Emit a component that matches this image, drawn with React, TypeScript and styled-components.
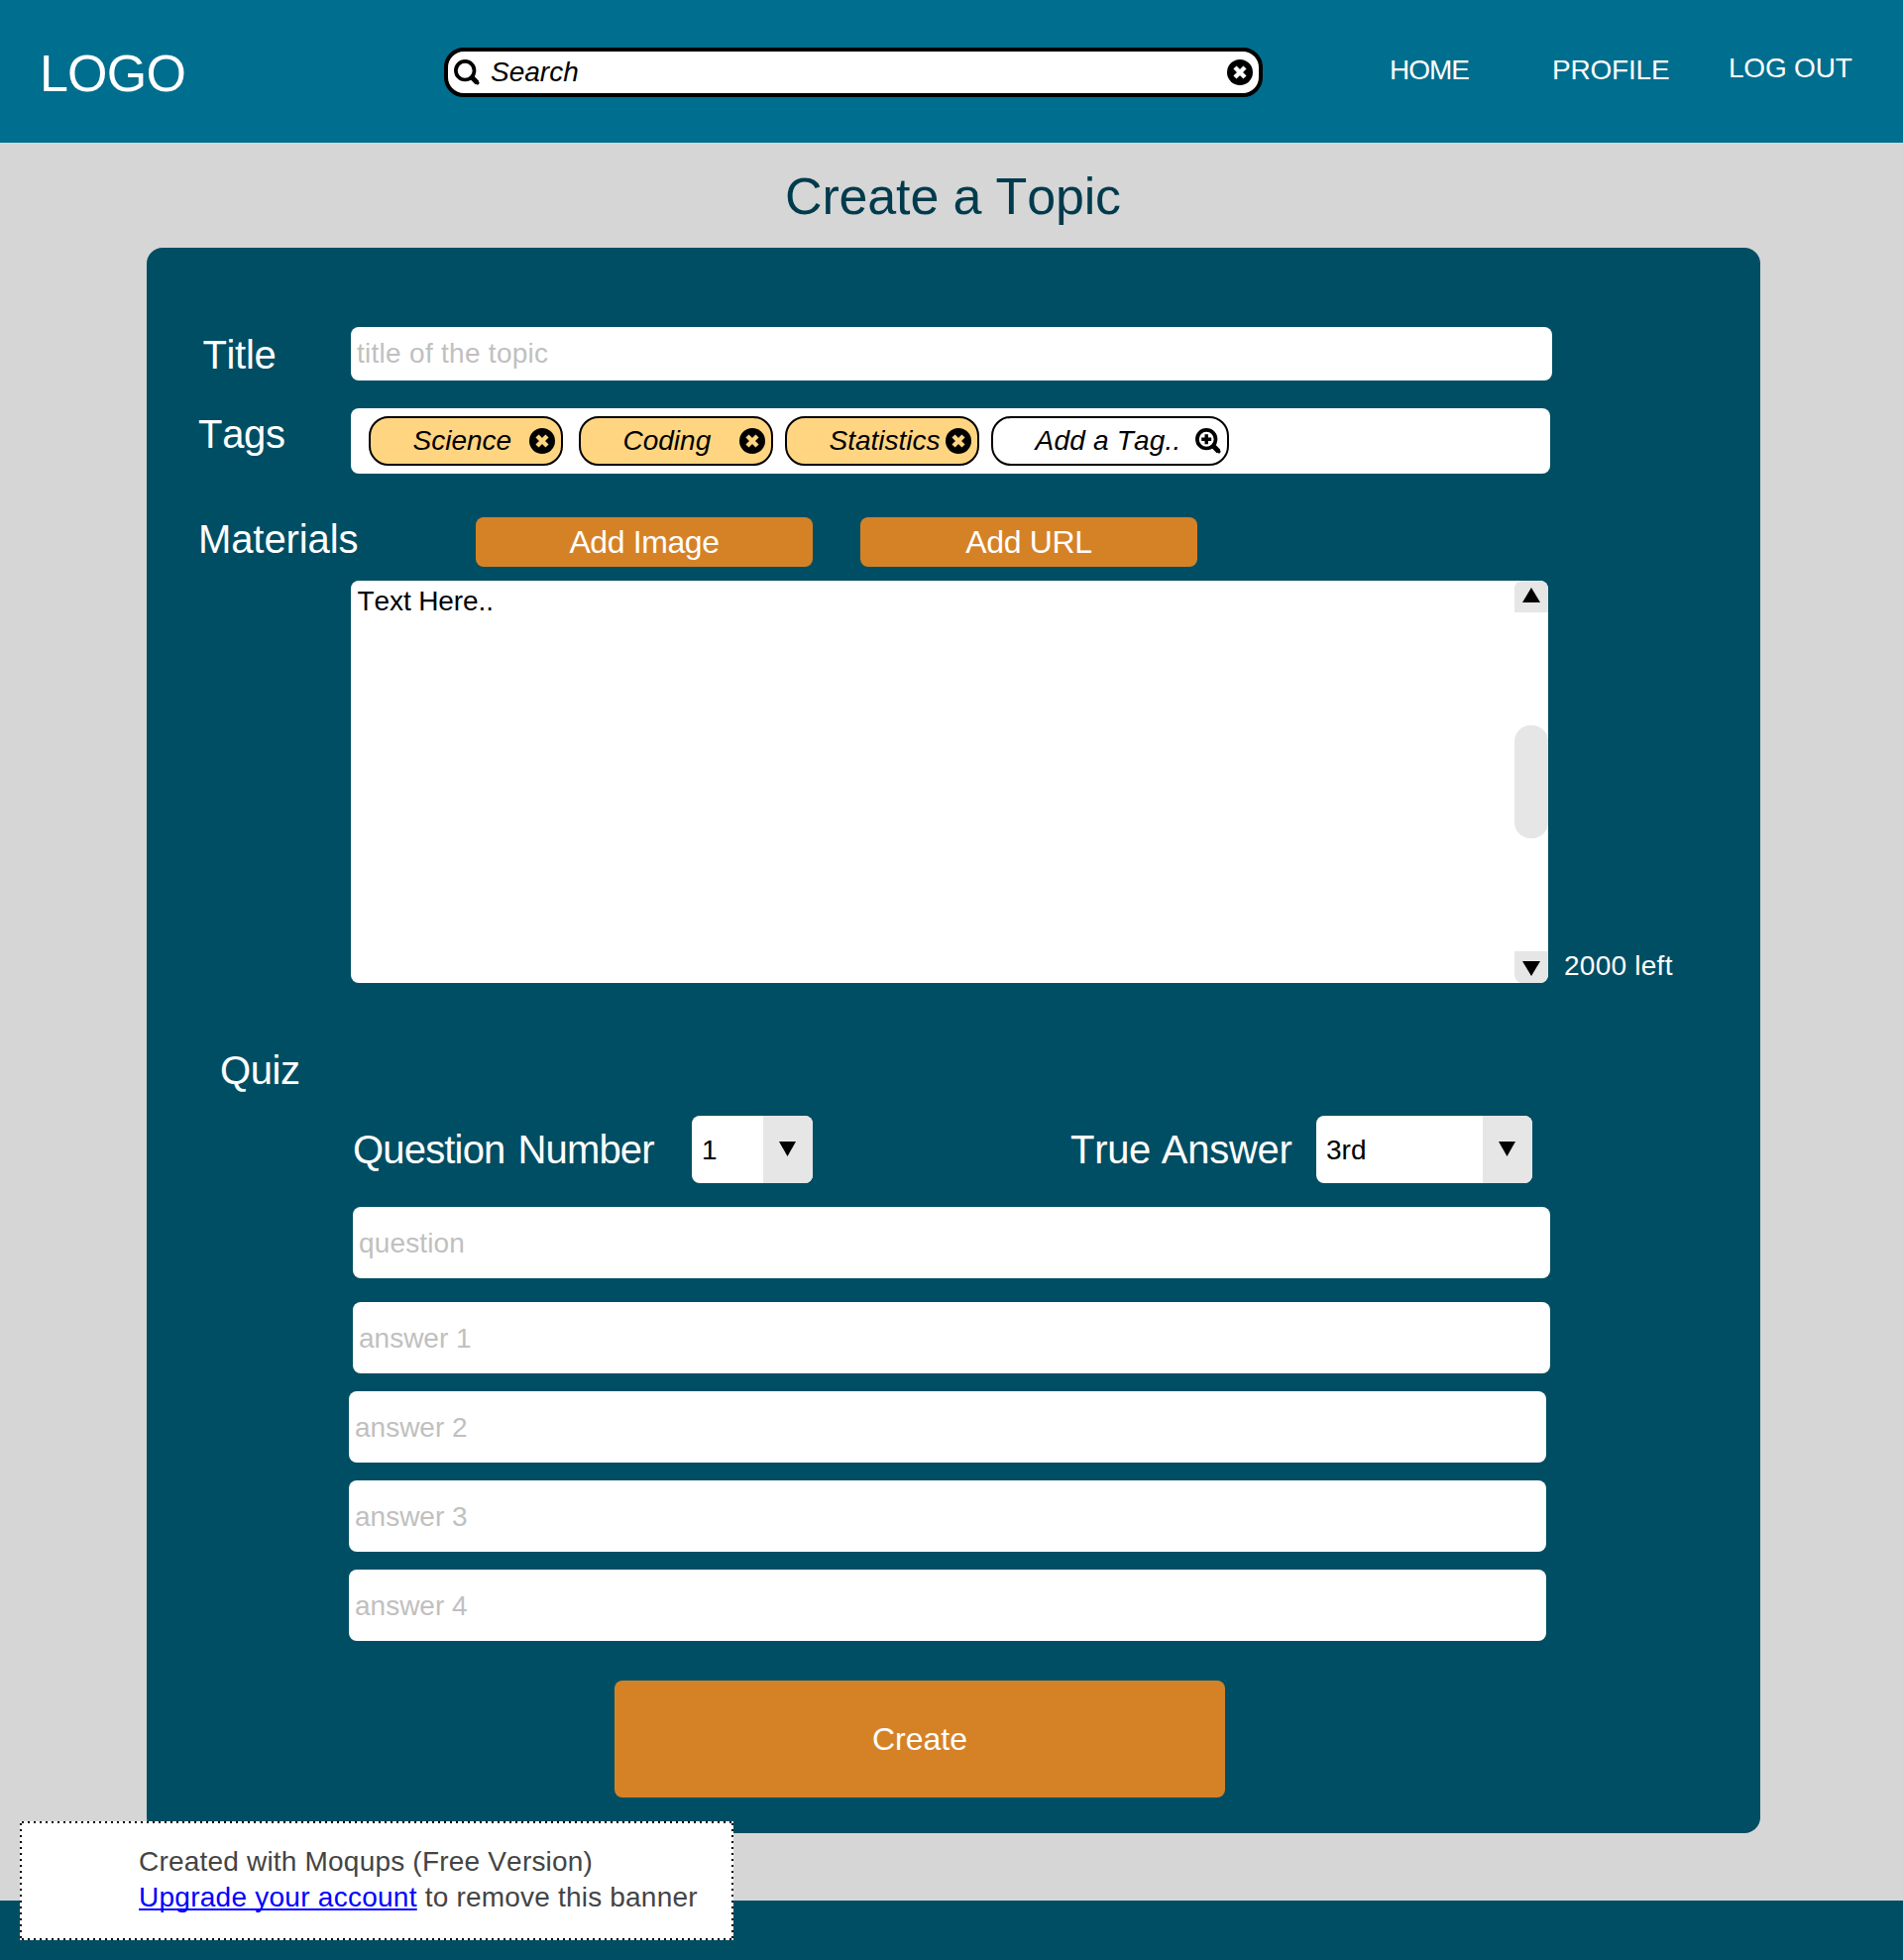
import React from "react";
import styled, { createGlobalStyle } from "styled-components";

const GlobalStyle = createGlobalStyle`
  * { box-sizing: border-box; }
  body { margin: 0; background: #d6d6d6; font-family: "Liberation Sans", Arial, sans-serif; font-size: 28px; line-height: 31px; font-kerning: none; color: #000; }
  button { font: inherit; font-kerning: none; }
`;

const Page = styled.div`
  width: 1920px;
  height: 1978px;
  display: flex;
  flex-direction: column;
  position: relative;
`;

const Header = styled.header`
  height: 144px;
  flex: none;
  display: flex;
  align-items: flex-start;
  background: #006e8e;
  color: #fff;
`;

const Logo = styled.div`
  width: 448px;
  padding: 45px 0 0 40px;
  font-size: 52px;
  line-height: 58px;
  letter-spacing: -0.8px;
`;

const SearchBox = styled.div`
  width: 826px;
  height: 50px;
  margin-top: 48px;
  padding: 0 6px;
  display: flex;
  align-items: center;
  justify-content: space-between;
  border: 4px solid #000;
  border-radius: 20px;
  background: #fff;
  color: #000;
`;

const SearchField = styled.div`
  display: flex;
  align-items: center;
  gap: 11px;
  font-style: italic;
`;

const SearchText = styled.span`
  padding-bottom: 2px;
`;

const Nav = styled.nav`
  display: flex;
  margin-left: 128px;
`;

const NavLink = styled.a<{ $width: number; $top?: number; $spacing?: number }>`
  width: ${(p) => p.$width}px;
  padding-top: ${(p) => p.$top ?? 55}px;
  letter-spacing: ${(p) => p.$spacing ?? 0}px;
  white-space: nowrap;
`;

const PageTitle = styled.h1`
  margin: 25px 0 23px;
  padding-left: 3px;
  text-align: center;
  font-size: 52px;
  line-height: 58px;
  font-weight: 400;
  letter-spacing: -0.15px;
  color: #003b4d;
`;

const Panel = styled.main`
  width: 1628px;
  height: 1600px;
  flex: none;
  margin-left: 148px;
  padding-top: 80px;
  border-radius: 16px;
  background: #004e63;
  color: #fff;
`;

const Row = styled.div<{ $gap: number }>`
  display: flex;
  align-items: flex-start;
  margin-bottom: ${(p) => p.$gap}px;
`;

const RowLabel = styled.div<{ $left: number; $top: number; $width?: number; $spacing?: number; $words?: number }>`
  width: ${(p) => p.$width ?? 206}px;
  flex: none;
  padding: ${(p) => p.$top}px 0 0 ${(p) => p.$left}px;
  font-size: 40px;
  line-height: 44px;
  white-space: nowrap;
  letter-spacing: ${(p) => p.$spacing ?? 0}px;
  word-spacing: ${(p) => p.$words ?? 0}px;
`;

const Field = styled.div<{ $width?: number; $height?: number; $spacing?: number }>`
  width: ${(p) => p.$width ?? 1208}px;
  height: ${(p) => p.$height ?? 72}px;
  padding-left: 6px;
  display: flex;
  align-items: center;
  border-radius: 8px;
  background: #fff;
  color: #c0c0c0;
  letter-spacing: ${(p) => p.$spacing ?? 0}px;
`;

const TitleField = styled(Field)`
  padding-bottom: 2px;
`;

const TagField = styled(Field)`
  padding-left: 18px;
  color: #000;
`;

const Tag = styled.div<{ $gap?: number; $open?: boolean }>`
  width: ${(p) => (p.$open ? 240 : 196)}px;
  height: 50px;
  margin-right: ${(p) => p.$gap ?? 0}px;
  padding: 0 6px 0 42.5px;
  display: flex;
  align-items: center;
  justify-content: space-between;
  border: 2px solid #000;
  border-radius: 20px;
  background: ${(p) => (p.$open ? "#fff" : "#ffd581")};
  font-style: italic;
  white-space: nowrap;
  letter-spacing: ${(p) => (p.$open ? 0.2 : 0)}px;
`;

const TagName = styled.span`
  width: 0;
  padding-bottom: 2px;
`;

const Action = styled.button<{ $width: number; $height: number; $right?: number; $spacing?: number }>`
  width: ${(p) => p.$width}px;
  height: ${(p) => p.$height}px;
  margin: 0 ${(p) => p.$right ?? 0}px 0 0;
  padding: 0;
  border: 0;
  border-radius: 8px;
  background: #d58227;
  color: #fff;
  font-size: 32px;
  line-height: 36px;
  letter-spacing: ${(p) => p.$spacing ?? 0}px;
`;

const TextArea = styled.div`
  width: 1208px;
  height: 406px;
  display: flex;
  justify-content: space-between;
  border-radius: 8px;
  overflow: hidden;
  background: #fff;
  color: #000;
`;

const AreaText = styled.div`
  padding: 5px 0 0 6.5px;
  letter-spacing: -0.1px;
`;

const ScrollBar = styled.div`
  width: 34px;
  display: flex;
  flex-direction: column;
  justify-content: space-between;
`;

const ScrollButton = styled.div<{ $end?: boolean }>`
  height: 32px;
  display: flex;
  justify-content: center;
  padding-top: ${(p) => (p.$end ? 10 : 7)}px;
  border-radius: ${(p) => (p.$end ? "0 0 8px 8px" : "8px 8px 0 0")};
  background: #e6e6e6;
`;

const ScrollThumb = styled.div`
  height: 114px;
  border-radius: 16px;
  background: #e6e6e6;
`;

const Counter = styled.div`
  padding: 373px 0 0 16px;
  letter-spacing: 0.25px;
`;

const SelectBox = styled.div<{ $width: number; $arrow: number }>`
  width: ${(p) => p.$width}px;
  height: 68px;
  display: grid;
  grid-template-columns: 1fr ${(p) => p.$arrow}px;
  align-items: center;
  padding-left: 10px;
  border-radius: 8px;
  overflow: hidden;
  background: #fff;
  color: #000;
`;

const SelectArrow = styled.div`
  height: 100%;
  padding: 26px 1px 0 0;
  display: flex;
  justify-content: center;
  background: #e6e6e6;
`;

const QuizFields = styled.div<{ $left: number; $gap: number }>`
  display: flex;
  flex-direction: column;
  gap: ${(p) => p.$gap}px;
  margin: 0 0 18px ${(p) => p.$left}px;
`;

const SubmitRow = styled.div`
  padding: 22px 0 0 472px;
`;

const Footer = styled.footer`
  height: 60px;
  flex: none;
  margin-top: 68px;
  background: #004e63;
`;

/* The dotted frame is four strips of 2px dots, one every 6px. */
const Banner = styled.aside`
  position: absolute;
  left: 20px;
  top: 1838px;
  width: 720px;
  height: 120px;
  padding: 23px 0 0 120px;
  background:
    repeating-linear-gradient(90deg, #fff 0 2px, #000 2px 4px, #fff 4px 6px) 0 0 / 100% 2px no-repeat,
    repeating-linear-gradient(90deg, #fff 0 2px, #000 2px 4px, #fff 4px 6px) 0 100% / 100% 2px no-repeat,
    repeating-linear-gradient(180deg, #fff 0 2px, #000 2px 4px, #fff 4px 6px) 0 0 / 2px 100% no-repeat,
    repeating-linear-gradient(180deg, #fff 0 2px, #000 2px 4px, #fff 4px 6px) 100% 0 / 2px 100% no-repeat,
    #fff;
  color: #444;
  line-height: 36px;
  letter-spacing: 0.2px;
  white-space: nowrap;
`;

const UpgradeLink = styled.a`
  color: #00f;
  letter-spacing: 0.26px;
  text-decoration: underline;
  text-decoration-thickness: 2px;
  text-underline-offset: 2px;
  text-decoration-skip-ink: none;
`;

const SearchIcon = ({ plus = false }: { plus?: boolean }) => (
  <svg width="26" height="26" viewBox="0 0 26 26" fill="none" stroke="#000">
    <circle cx="11.2" cy="11.2" r="9.3" strokeWidth="3.7" />
    <path d="M17.6 17.6 23.4 23.4" strokeWidth="5" />
    <path d="M22.6 22.6 23.8 23.8" strokeWidth="3.4" strokeLinecap="round" />
    {plus && <path d="M11.2 6.2v10M6.2 11.2h10" strokeWidth="3.4" />}
  </svg>
);

const CloseIcon = ({ cross = "#fff" }: { cross?: string }) => (
  <svg width="26" height="26" viewBox="0 0 26 26">
    <circle cx="13" cy="13" r="13" />
    <path d="M8 8 18 18M18 8 8 18" stroke={cross} strokeWidth="4.4" />
  </svg>
);

const Triangle = ({ up = false, width = 18 }: { up?: boolean; width?: number }) => (
  <svg width={width} height="15" viewBox="0 0 18 15" preserveAspectRatio="none">
    <path d={up ? "M0 15 9 0 18 15Z" : "M0 0H18L9 15Z"} />
  </svg>
);

const tags = [
  { name: "Science", gap: 16 },
  { name: "Coding", gap: 12 },
  { name: "Statistics", gap: 12 },
];

export default function App() {
  return (
    <Page>
      <GlobalStyle />
      <Header>
        <Logo>LOGO</Logo>
        <SearchBox>
          <SearchField>
            <SearchIcon />
            <SearchText>Search</SearchText>
          </SearchField>
          <CloseIcon />
        </SearchBox>
        <Nav>
          <NavLink $width={164} $spacing={-1}>HOME</NavLink>
          <NavLink $width={178} $spacing={-0.2}>PROFILE</NavLink>
          <NavLink $width={130} $top={53} $spacing={-0.2}>LOG OUT</NavLink>
        </Nav>
      </Header>
      <PageTitle>Create a Topic</PageTitle>
      <Panel>
        <Row $gap={28}>
          <RowLabel $left={56.5} $top={6} $spacing={-0.35}>Title</RowLabel>
          <TitleField $width={1212} $height={54} $spacing={0.28}>title of the topic</TitleField>
        </Row>
        <Row $gap={44}>
          <RowLabel $left={52} $top={4} $spacing={-0.3}>Tags</RowLabel>
          <TagField $width={1210} $height={66}>
            {tags.map((tag) => (
              <Tag key={tag.name} $gap={tag.gap}>
                <TagName>{tag.name}</TagName>
                <CloseIcon cross="#ffd581" />
              </Tag>
            ))}
            <Tag $open>
              <TagName>Add a Tag..</TagName>
              <SearchIcon plus />
            </Tag>
          </TagField>
        </Row>
        <Row $gap={14}>
          <RowLabel $left={52} $top={0} $width={332} $spacing={-0.1}>Materials</RowLabel>
          <Action $width={340} $height={50} $right={48} $spacing={-0.4}>Add Image</Action>
          <Action $width={340} $height={50} $spacing={-0.35}>Add URL</Action>
        </Row>
        <Row $gap={66}>
          <RowLabel $left={0} $top={0} />
          <TextArea>
            <AreaText>Text Here..</AreaText>
            <ScrollBar>
              <ScrollButton><Triangle up /></ScrollButton>
              <ScrollThumb />
              <ScrollButton $end><Triangle /></ScrollButton>
            </ScrollBar>
          </TextArea>
          <Counter>2000 left</Counter>
        </Row>
        <Row $gap={24}>
          <RowLabel $left={74} $top={0} $spacing={-0.4}>Quiz</RowLabel>
        </Row>
        <Row $gap={24}>
          <RowLabel $left={208} $top={12} $width={550} $spacing={-0.82} $words={2.6}>Question Number</RowLabel>
          <SelectBox $width={122} $arrow={50}>
            1
            <SelectArrow><Triangle width={17} /></SelectArrow>
          </SelectBox>
          <RowLabel $left={260} $top={12} $width={508} $spacing={-0.3}>True Answer</RowLabel>
          <SelectBox $width={218} $arrow={50}>
            3rd
            <SelectArrow><Triangle width={17} /></SelectArrow>
          </SelectBox>
        </Row>
        <QuizFields $left={208} $gap={24}>
          <Field $spacing={0.15}>question</Field>
          <Field>answer 1</Field>
        </QuizFields>
        <QuizFields $left={204} $gap={18}>
          <Field>answer 2</Field>
          <Field>answer 3</Field>
          <Field>answer 4</Field>
        </QuizFields>
        <SubmitRow>
          <Action $width={616} $height={118}>Create</Action>
        </SubmitRow>
      </Panel>
      <Footer />
      <Banner>
        <div>Created with Moqups (Free Version)</div>
        <div><UpgradeLink>Upgrade your account</UpgradeLink> to remove this banner</div>
      </Banner>
    </Page>
  );
}
